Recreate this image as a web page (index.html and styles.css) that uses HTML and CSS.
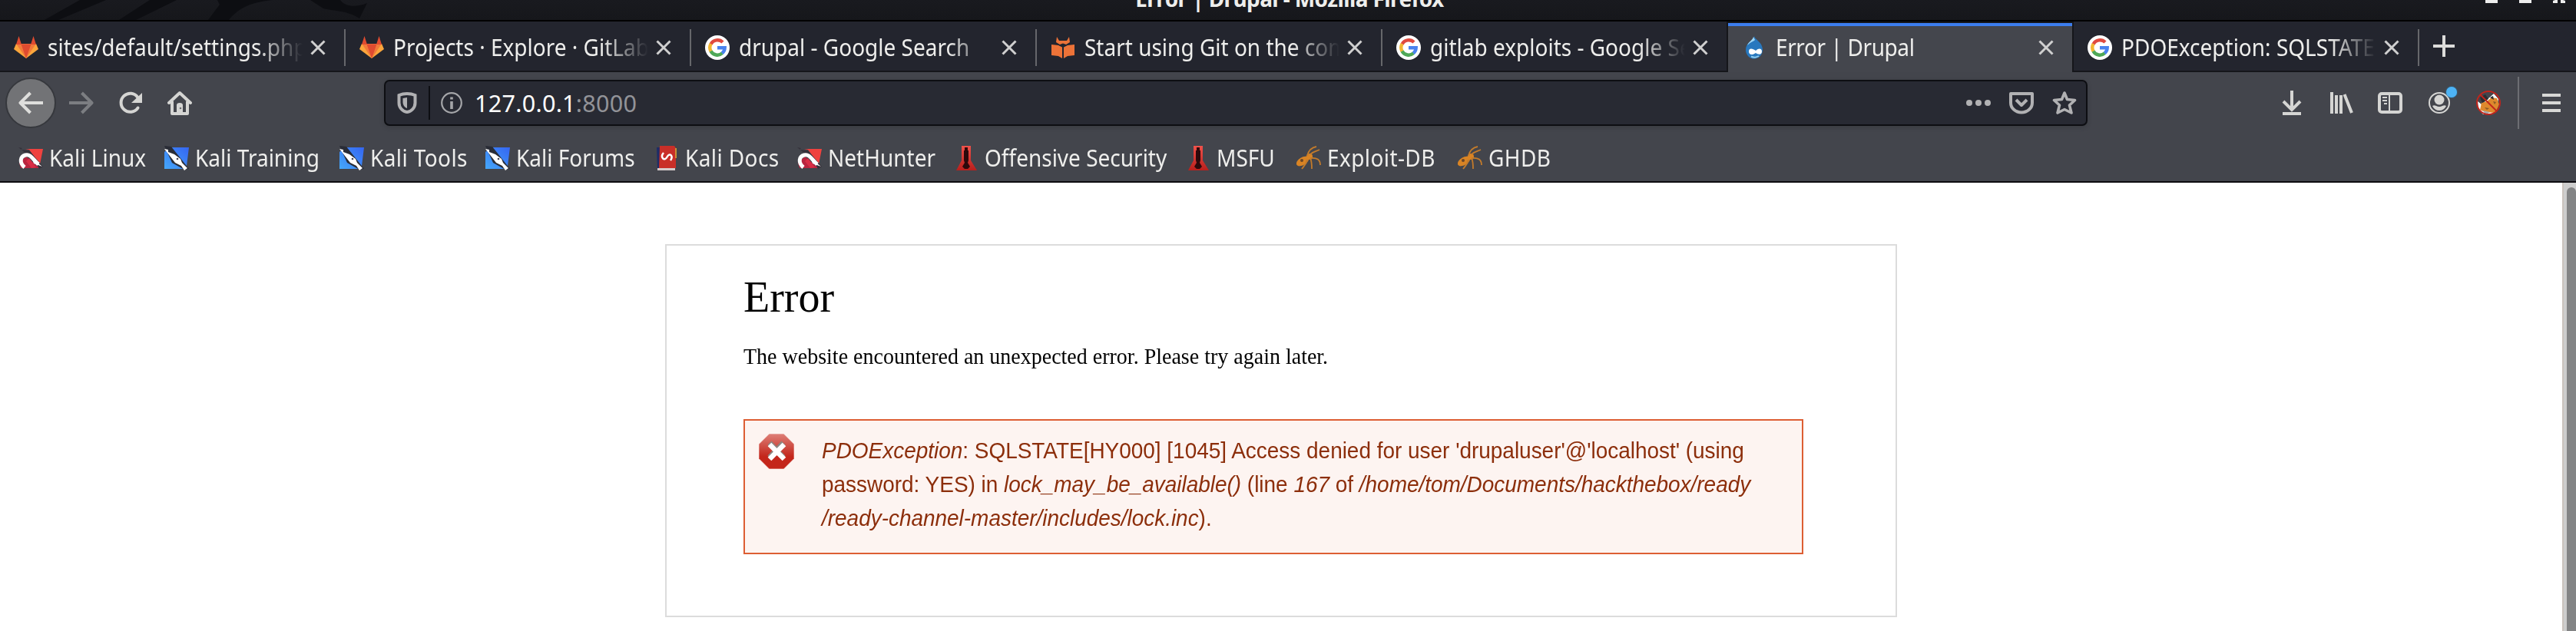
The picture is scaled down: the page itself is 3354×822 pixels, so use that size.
FILE: index.html
```html
<!DOCTYPE html>
<html lang="en">
<head>
<meta charset="utf-8">
<title>Error | Drupal</title>
<link rel="stylesheet" href="styles.css">
</head>
<body>
<svg class="defs" width="0" height="0">
  <defs>
    <linearGradient id="stop-fill" x1="0" y1="0" x2="0" y2="1"><stop offset="0" stop-color="#de8078"/><stop offset=".5" stop-color="#c93a30"/><stop offset=".65" stop-color="#c4261b"/><stop offset="1" stop-color="#c4261b"/></linearGradient>
    <linearGradient id="kali-blue" x1="0" y1="1" x2="1" y2="0"><stop offset="0" stop-color="#45a8fa"/><stop offset="1" stop-color="#3565f2"/></linearGradient>
    <linearGradient id="msf-red" x1="0" y1="0" x2="0" y2="1"><stop offset="0" stop-color="#f0514a"/><stop offset="1" stop-color="#b81f1c"/></linearGradient>
  </defs>
  <symbol id="gitlab" viewBox="0 0 32 32"><path fill="#fba63c" d="M16 30 0 18 3 11H29L32 18Z"/><path fill="#f2793a" d="M16 30 3 11H29Z"/><path fill="#df4b30" d="M16 30 9.500 11.500H22.500ZM3 12 6.500 1 10 12ZM22 12 25.500 1 29 12Z"/></symbol>
  <symbol id="google" viewBox="0 0 32 32"><circle cx="16" cy="16" r="16" fill="#fff"/><g fill="none" stroke-width="4.400"><path stroke="#e04a3f" d="M7.600 11.400A9.700 9.700 0 0 1 23 9"/><path stroke="#f2b632" d="M7.600 20.800A9.700 9.700 0 0 1 7.600 11.200"/><path stroke="#4fa857" d="M7.500 20.600A9.700 9.700 0 0 0 22.500 23.200"/><path stroke="#4a82ee" d="M16 16.300H25.700A9.700 9.700 0 0 1 22.300 23.400"/></g></symbol>
  <symbol id="gitbook" viewBox="0 0 32 32"><g fill="#ed7338"><path d="M8 2 11 7H21L24 2 25 9 20 12 16 10.500 12 12 7 9Z"/><path d="M1 12 10 13 15 15.500V30L10 27 1 26ZM31 12 22 13 17 15.500V30L22 27 31 26Z"/></g></symbol>
  <symbol id="drupal" viewBox="0 0 32 32"><path fill="#2878be" d="M16 1C17 6 27 9 27 19A11 11.500 0 0 1 5 19C5 9 15 7 16 1Z"/><path fill="#9ed6f5" d="M15 2C14 6 9 8 7 13 11 9 15 8 17 6Z"/><path fill="#fff" d="M9 21C9 16 14 17 18 20 22 16 26 17 26 21 26 26 21 25 18 23 14 26 9 26 9 21Z"/><path fill="none" stroke="#8ecbed" stroke-width="2" d="M12 27.500Q17 30 22 27"/></symbol>
  <symbol id="close" viewBox="0 0 20 20"><path d="M1.500 1.500 18.500 18.500M18.500 1.500 1.500 18.500" stroke="#d0d0d0" stroke-width="3" fill="none"/></symbol>
  <symbol id="kali-red" viewBox="0 0 32 32"><path fill="#ef423f" d="M9 4H32L28 24 14 5Z"/><path fill="#b8243f" d="M1 22 10 14 28 29H3Z"/><path fill="#34313a" d="M0 2 5 3 3 5 14 6 32 27 27 30 22 20Z"/><path fill="none" stroke="#fff" stroke-width="5" d="M8 28C1 22 2 14 9 12 16 10 19 18 26 24"/><path fill="#fff" d="M17 15 31 27 20 23Z"/><path fill="#d92d45" d="M10 20 14 16 23 28 17 29Z"/></symbol>
  <symbol id="kali-cyan" viewBox="0 0 32 32"><path fill="url(#kali-blue)" d="M8 2H32L29 26H26L26 30H0V8Z"/><path fill="#292c36" d="M0 0 9 1 32 30 26 31 10 22Z"/><path fill="#fff" d="M0 4 5 5 5 8 13 11 21 17 23 22 30 29 26 32 22 26 14 22Z"/><circle cx="17" cy="17" r="1.300" fill="#445"/></symbol>
  <symbol id="docs" viewBox="0 0 32 32"><path fill="#1f2c66" d="M3 2H9V31H4Z"/><path fill="#c92f28" d="M7 0H26L28 3V29H6Z"/><path fill="#d5cbcb" d="M4 29H27V32H4Z"/><path stroke="#c99137" stroke-width="2" d="M28 3V16"/><path fill="none" stroke="#fff" stroke-width="2.500" d="M12 9C7 15 13 21 16.500 14.500 20 8 25 13 21 19"/></symbol>
  <symbol id="tower" viewBox="0 0 32 32"><path fill="url(#msf-red)" d="M10 0H22V19L30 32H3L10 19Z"/><path fill="#2c090b" d="M14 2H18V6H19V19L18 22 21 27 18 30H14L11 27 14 22 13 19V6H14Z"/></symbol>
  <symbol id="ant" viewBox="0 0 32 32"><ellipse cx="8" cy="20" rx="9" ry="5" fill="#d98424" transform="rotate(-32 8 20)"/><circle cx="17" cy="14" r="4" fill="#d98424"/><circle cx="7" cy="19" r="2" fill="#6b4627"/><path fill="none" stroke="#c37b2b" stroke-width="1.800" d="M14 13C16 5 20 2 26 1M18 11C22 7 26 7 30 5M18 16C27 15 31 18 31 25M18 16C20 20 20 24 20 30M14 18C13 24 10 26 7 30"/></symbol>
  <symbol id="metamask" viewBox="0 0 32 32"><path fill="#fff" d="M23 4 29 11 27 21 21 31H9L3 24 2 14 7 18Z"/><path fill="#de892d" d="M7 16 14 14 20 9 27 10 30 18 25 29 12 28 5 25Z"/><path fill="#2b2d31" d="M5 9 12 5 16 11 8 16ZM18 9 22 7 23 12Z"/><path fill="#8a5a26" d="M11 22 17 23 14 25ZM22 14 26 15 24 18Z"/><path d="M9 26 18 28 15 30H11Z" fill="#a9aaac"/><circle cx="16" cy="16" r="15" fill="none" stroke="#c1251c" stroke-width="2"/><path d="M5 5 27 27" stroke="#c1251c" stroke-width="2"/></symbol>
</svg>

<header class="titlebar">
  <svg class="swirl" viewBox="0 0 500 26"><g fill="#0d0e12"><path d="M58 26 104 0H138L76 26ZM155 26 195 0H230L177 26ZM271 26 286 6 283 0H354C324 3 308 13 298 26ZM404 0H443C449 9 464 10 478 4L468 24C451 13 437 15 421 11Z"/></g></svg>
  <div class="window-title">Error | Drupal - Mozilla Firefox</div>
  <div class="window-buttons"><i></i><i></i><svg viewBox="0 0 16 4"><path d="M0 4V1L3 0H6V4ZM10 4V0H13L16 1V4Z" fill="#eee"/></svg></div>
</header>

<nav class="tabs">
  <div class="tab"><svg class="fav"><use href="#gitlab"/></svg><span class="label">sites/default/settings.php</span><svg class="close"><use href="#close"/></svg></div>
  <div class="tab"><svg class="fav"><use href="#gitlab"/></svg><span class="label">Projects · Explore · GitLab</span><svg class="close"><use href="#close"/></svg></div>
  <div class="tab"><svg class="fav"><use href="#google"/></svg><span class="label">drupal - Google Search</span><svg class="close"><use href="#close"/></svg></div>
  <div class="tab"><svg class="fav"><use href="#gitbook"/></svg><span class="label">Start using Git on the com</span><svg class="close"><use href="#close"/></svg></div>
  <div class="tab before-active"><svg class="fav"><use href="#google"/></svg><span class="label">gitlab exploits - Google Se</span><svg class="close"><use href="#close"/></svg></div>
  <div class="tab active"><svg class="fav"><use href="#drupal"/></svg><span class="label">Error | Drupal</span><svg class="close"><use href="#close"/></svg></div>
  <div class="tab"><svg class="fav"><use href="#google"/></svg><span class="label">PDOException: SQLSTATE</span><svg class="close"><use href="#close"/></svg></div>
  <svg class="new-tab" viewBox="0 0 28 28"><path d="M14 0V28M0 14H28" stroke="#dcdcda" stroke-width="4"/></svg>
</nav>

<section class="navbar">
  <div class="back"><svg viewBox="0 0 32 32"><path d="M32 16H3M15.500 3 2.500 16 15.500 29" fill="none" stroke="#dededc" stroke-width="4" stroke-linejoin="round"/></svg></div>
  <svg class="ico forward" viewBox="0 0 32 32"><path d="M0 16H29M16.500 3 29.500 16 16.500 29" fill="none" stroke="#7c7e82" stroke-width="4" stroke-linejoin="round"/></svg>
  <svg class="ico reload" viewBox="0 0 32 32"><path d="M25.500 22.500A12 12 0 1 1 25.500 9" fill="none" stroke="#d5d5d3" stroke-width="4" stroke-linecap="round"/><path d="M31 3V16H17Z" fill="#d5d5d3"/></svg>
  <svg class="ico home" viewBox="0 0 32 32"><path d="M2 16 16 3 30 16" fill="none" stroke="#d5d5d3" stroke-width="4" stroke-linecap="round" stroke-linejoin="round"/><path d="M6 14V30H26V14" fill="none" stroke="#d5d5d3" stroke-width="4" stroke-linejoin="round"/><path d="M12 30V19Q12 16 16 16T20 19V30Z" fill="#d5d5d3"/><circle cx="17" cy="23" r="1.300" fill="#6d6e72"/></svg>
  <div class="urlbar">
    <svg class="shield" viewBox="0 0 26 28"><path d="M13 2C17 2 20 2.500 23.500 4V14C23.500 20 19 25.500 13 26 7 25.500 2.500 20 2.500 14V4C6 2.500 9 2 13 2Z" fill="none" stroke="#b1b1b3" stroke-width="4"/><path d="M13 7V21C10 20 7.500 17 7.500 13V8Z" fill="#b1b1b3"/></svg>
    <span class="url-divider"></span>
    <svg class="info" viewBox="0 0 28 28"><circle cx="14" cy="14" r="12.800" fill="none" stroke="#a5a6a9" stroke-width="2.200"/><path d="M14 12V22M14 6.500V9.500" stroke="#a5a6a9" stroke-width="3.600"/></svg>
    <span class="url">127.0.0.1<span class="port">:8000</span></span>
    <svg class="url-ico" viewBox="0 0 32 32"><g fill="#b1b1b3"><circle cx="4" cy="16" r="4"/><circle cx="16" cy="16" r="4"/><circle cx="28" cy="16" r="4"/></g></svg>
    <svg class="url-ico" viewBox="0 0 32 32"><path d="M2 4H30V16A14 12.500 0 0 1 2 16ZM9 12 16 19 23 12" fill="none" stroke="#b1b1b3" stroke-width="4" stroke-linejoin="round"/></svg>
    <svg class="url-ico" viewBox="0 0 32 32"><path d="M16 3 19.500 11.500 29.500 12.500 22.500 19 25 29 16 24.500 7 29 9.500 19 2.500 12.500 12.500 11.500Z" fill="none" stroke="#b1b1b3" stroke-width="3.600" stroke-linejoin="round"/></svg>
  </div>
  <div class="tools">
    <svg class="ico" viewBox="0 0 32 32"><path d="M16 0V24M5 14 16 25 27 14" fill="none" stroke="#d5d5d3" stroke-width="4"/><path d="M4 30H28" stroke="#d5d5d3" stroke-width="4"/></svg>
    <svg class="ico" viewBox="0 0 32 32"><path d="M4 2V30M10 6V30M16 6V30M20.500 5 30 29" stroke="#d5d5d3" stroke-width="4" fill="none"/></svg>
    <svg class="ico" viewBox="0 0 32 32"><rect x="2" y="4" width="28" height="24" rx="3" fill="none" stroke="#d5d5d3" stroke-width="4"/><path d="M15 4V28M6 9H12M6 13H12M8 17H12" stroke="#d5d5d3" stroke-width="2"/></svg>
    <div class="account"><svg class="ico" viewBox="0 0 32 32"><circle cx="16" cy="16" r="13" fill="none" stroke="#d5d5d3" stroke-width="2"/><circle cx="16" cy="12" r="6.500" fill="#d5d5d3"/><path d="M7 20C10 18 12 21 16 21S22 18 25 20C23 24 20 26 16 26S9 24 7 20Z" fill="#d5d5d3"/></svg><i class="dot"></i></div>
    <svg class="ico"><use href="#metamask"/></svg>
    <span class="tool-divider"></span>
    <svg class="ico menu" viewBox="0 0 32 32"><path d="M4 6H28M4 16H28M4 26H28" stroke="#d8d8d6" stroke-width="4"/></svg>
  </div>
</section>

<section class="bookmarks">
  <a class="w190"><svg class="fav"><use href="#kali-red"/></svg><span>Kali Linux</span></a>
  <a class="w228"><svg class="fav"><use href="#kali-cyan"/></svg><span>Kali Training</span></a>
  <a class="w190"><svg class="fav"><use href="#kali-cyan"/></svg><span class="wider">Kali Tools</span></a>
  <a class="w220"><svg class="fav"><use href="#kali-cyan"/></svg><span>Kali Forums</span></a>
  <a class="w186"><svg class="fav"><use href="#docs"/></svg><span class="wider">Kali Docs</span></a>
  <a class="w204"><svg class="fav"><use href="#kali-red"/></svg><span>NetHunter</span></a>
  <a class="w302"><svg class="fav"><use href="#tower"/></svg><span>Offensive Security</span></a>
  <a class="w144"><svg class="fav"><use href="#tower"/></svg><span>MSFU</span></a>
  <a class="w210"><svg class="fav"><use href="#ant"/></svg><span class="wider">Exploit-DB</span></a>
  <a class="w190"><svg class="fav"><use href="#ant"/></svg><span class="wider">GHDB</span></a>
</section>

<div class="viewport">
  <main class="page">
    <article class="panel">
      <h1>Error</h1>
      <p>The website encountered an unexpected error. Please try again later.</p>
      <div class="message">
        <svg class="stop" viewBox="0 0 46 46"><path d="M13.500 0H32.500L46 13.500V32.500L32.500 46H13.500L0 32.500V13.500Z" fill="url(#stop-fill)" stroke="#fff" stroke-opacity=".6"/><path d="M14 12 32 31M32 12 14 31" stroke="#8e8580" stroke-width="7"/><path d="M14 14 33 33M33 14 14 33" stroke="#fff" stroke-width="6.500"/></svg>
        <div class="message-text"><em>PDOException</em>: SQLSTATE[HY000] [1045] Access denied for user 'drupaluser'@'localhost' (using<br>password: YES) in <em>lock_may_be_available()</em> (line <em>167</em> of <em>/home/tom/Documents/hackthebox/ready<br>/ready-channel-master/includes/lock.inc</em>).</div>
      </div>
    </article>
  </main>
  <aside class="scrollbar"><div class="thumb"></div></aside>
</div>
</body>
</html>
```

FILE: styles.css
```css
* { box-sizing: border-box; }
body {
  margin: 0;
  width: 3354px;
  height: 822px;
  overflow: hidden;
  display: flex;
  flex-direction: column;
  background: #fff;
  font-family: "Noto Sans", sans-serif;
  font-size: 28px;
  color: #eeeeec;
}
svg { display: block; flex: none; }
.defs { position: absolute; }

.titlebar {
  flex: none;
  display: grid;
  grid-template-columns: 500px 1fr 500px;
  height: 28px;
  background: linear-gradient(#191a1f, #16171b);
  border-bottom: 2px solid #000;
  overflow: hidden;
}
.swirl { width: 500px; height: 26px; }
.window-title {
  justify-self: center;
  margin-top: -22px;
  margin-left: 4px;
  line-height: 40px;
  font-size: 28px;
  letter-spacing: -.6px;
  font-weight: 700;
  white-space: nowrap;
}
.window-buttons {
  display: flex;
  justify-content: flex-end;
  gap: 28px;
  padding-right: 14px;
}
.window-buttons i { width: 16px; height: 4px; background: #eee; }
.window-buttons svg { width: 16px; height: 4px; }

.tabs {
  flex: none;
  display: flex;
  height: 66px;
  background: #23252e;
}
.tab {
  position: relative;
  flex: none;
  display: flex;
  align-items: center;
  width: 450px;
  padding: 4px 26px 0 18px;
  border-bottom: 2px solid #15161a;
}
.tab::after {
  content: "";
  position: absolute;
  right: 0;
  top: 10px;
  width: 2px;
  height: 48px;
  background: #66676b;
}
.fav { width: 32px; height: 32px; }
.label {
  flex: 1;
  min-width: 0;
  margin: 0 10px 3px 12px;
  overflow: hidden;
  white-space: nowrap;
  line-height: 38px;
  transform: scaleY(1.08);
  -webkit-mask-image: linear-gradient(to right, #000 calc(100% - 60px), transparent);
  mask-image: linear-gradient(to right, #000 calc(100% - 60px), transparent);
}
.active .label { letter-spacing: -.4px; }
.close { width: 20px; height: 20px; }
.before-active::after { top: 0; height: 66px; background: #15161a; }
.active {
  background: linear-gradient(#15161a 2px, #3c7dee 2px, #3c7dee 6px, #44464d 6px);
  border-bottom-color: #44464d;
}
.active::after { top: 0; height: 66px; background: #15161a; }
.new-tab { width: 28px; height: 28px; margin: 18px 0 0 18px; }
.tabs::after { content: ""; flex: 1; margin-left: -46px; border-bottom: 2px solid #15161a; }

.navbar {
  flex: none;
  display: flex;
  align-items: center;
  height: 80px;
  background: #43454c;
}
.ico { width: 32px; height: 32px; }
.back {
  display: grid;
  place-items: center;
  width: 66px;
  height: 66px;
  margin-left: 7px;
  border: 2px solid #36383d;
  border-radius: 50%;
  background: #727376;
}
.back svg { width: 32px; height: 32px; }
.forward { margin-left: 17px; }
.reload { margin-left: 32px; }
.home { margin-left: 32px; }
.urlbar {
  display: flex;
  align-items: center;
  width: 2218px;
  height: 60px;
  margin-left: 250px;
  padding-right: 12px;
  border: 2px solid #0d0e12;
  border-radius: 7px;
  background: #282a33;
  box-shadow: 0 2px 6px rgba(0, 0, 0, .15);
}
.shield { width: 26px; height: 28px; margin-left: 15px; }
.url-divider { width: 2px; height: 44px; margin-left: 15px; background: #0d0e12; }
.info { width: 28px; height: 28px; margin: 0 16px 0 14px; }
.url { flex: 1; font-size: 30.600px; letter-spacing: .25px; line-height: 44px; color: #fff; }
.port { color: #929398; }
.url-ico { width: 32px; height: 32px; margin-left: 24px; }
.tools { display: flex; align-items: center; margin-left: 250px; }
.tools > .ico, .account { margin-right: 32px; }
.tools > .ico:nth-child(5) { margin-right: 22px; }
.account { position: relative; }
.dot {
  position: absolute;
  left: 25px;
  top: -5px;
  width: 14px;
  height: 14px;
  border-radius: 50%;
  background: #4db3f5;
  box-shadow: 0 0 2px #2585bf;
}
.tool-divider { width: 2px; height: 68px; background: #6d6e73; }
.tools > .menu { margin: 0 0 0 26px; }

.bookmarks {
  flex: none;
  display: flex;
  align-items: center;
  height: 64px;
  padding: 2px 0 0 24px;
  background: #43454c;
  border-bottom: 2px solid #0c0c0f;
}
.bookmarks a { flex: none; display: flex; align-items: center; }
.bookmarks span {
  margin: 0 0 3px 8px;
  line-height: 38px;
  white-space: nowrap;
  transform: scaleY(1.08);
}
.bookmarks .wider { letter-spacing: .4px; }
.w144 { width: 144px; }
.w186 { width: 186px; }
.w190 { width: 190px; }
.w204 { width: 204px; }
.w210 { width: 210px; }
.w220 { width: 220px; }
.w228 { width: 228px; }
.w302 { width: 302px; }

.viewport { flex: 1; display: flex; min-height: 0; }
.page { flex: 1; padding-top: 80px; color: #000; }
.panel {
  width: 1604px;
  height: 486px;
  margin: 0 auto;
  padding: 35px 120px 0 100px;
  border: 2px solid #dcdcdc;
  font-family: "Liberation Serif", serif;
}
.panel h1 { margin: 0; font-size: 56px; font-weight: 400; line-height: 64px; }
.panel p {
  margin: 24px 0 0;
  font-size: 28px;
  line-height: 44px;
  transform: scaleY(1.07);
  transform-origin: 0 31px;
}
.message {
  display: flex;
  width: 1380px;
  height: 176px;
  margin-top: 59px;
  padding: 18px 0 0 18px;
  border: 2px solid #dd5e33;
  background: #fdf4f1;
}
.stop { width: 46px; height: 46px; margin-top: -1px; }
.message-text {
  margin: -1px 0 0 36px;
  font-family: "Liberation Sans", sans-serif;
  font-size: 28px;
  letter-spacing: -.03px;
  line-height: 41.120px;
  transform: scaleY(1.07);
  transform-origin: 0 0;
  color: #8c2e0b;
  white-space: nowrap;
}
.scrollbar {
  width: 18px;
  padding: 6px 0 0 4px;
  background: #cdcdcd;
  border-left: 2px solid #c9c2bd;
}
.thumb { height: 600px; border-radius: 6px 6px 0 0; background: #838485; }
```
